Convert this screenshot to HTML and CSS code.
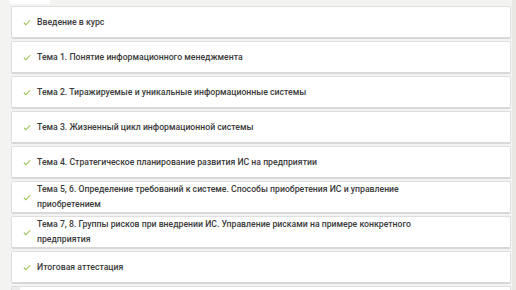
FILE: index.html
```html
<!DOCTYPE html>
<html lang="ru">
<head>
  <meta charset="UTF-8" />
  <meta name="viewport" content="width=device-width, initial-scale=1.0" />
  <title>Содержание курса</title>
  <link rel="stylesheet" href="styles.css">
</head>
<body>
  <div class="page">
    <main class="course">
      <div class="tab"></div>

      <!-- Список тем курса -->
      <ul class="topics">
        <li class="topic">
          <svg class="check" viewBox="0 0 10 8"><path d="M1 4.2 L3.6 6.8 L9 1.2" /></svg>
          <span class="title">Введение в курс</span>
        </li>
        <li class="topic">
          <svg class="check" viewBox="0 0 10 8"><path d="M1 4.2 L3.6 6.8 L9 1.2" /></svg>
          <span class="title">Тема 1. Понятие информационного менеджмента</span>
        </li>
        <li class="topic">
          <svg class="check" viewBox="0 0 10 8"><path d="M1 4.2 L3.6 6.8 L9 1.2" /></svg>
          <span class="title">Тема 2. Тиражируемые и уникальные информационные системы</span>
        </li>
        <li class="topic">
          <svg class="check" viewBox="0 0 10 8"><path d="M1 4.2 L3.6 6.8 L9 1.2" /></svg>
          <span class="title">Тема 3. Жизненный цикл информационной системы</span>
        </li>
        <li class="topic">
          <svg class="check" viewBox="0 0 10 8"><path d="M1 4.2 L3.6 6.8 L9 1.2" /></svg>
          <span class="title">Тема 4. Стратегическое планирование развития ИС на предприятии</span>
        </li>
        <li class="topic">
          <svg class="check" viewBox="0 0 10 8"><path d="M1 4.2 L3.6 6.8 L9 1.2" /></svg>
          <span class="title">Тема 5, 6. Определение требований к системе. Способы приобретения ИС и управление приобретением</span>
        </li>
        <li class="topic">
          <svg class="check" viewBox="0 0 10 8"><path d="M1 4.2 L3.6 6.8 L9 1.2" /></svg>
          <span class="title">Тема 7, 8. Группы рисков при внедрении ИС. Управление рисками на примере конкретного предприятия</span>
        </li>
        <li class="topic">
          <svg class="check" viewBox="0 0 10 8"><path d="M1 4.2 L3.6 6.8 L9 1.2" /></svg>
          <span class="title">Итоговая аттестация</span>
        </li>
        <li class="topic topic-next">
          <div class="inner"></div>
        </li>
      </ul>
    </main>
    <div class="track"></div>
  </div>
</body>
</html>
```

FILE: styles.css
```css
/* Base */
html, body {
  margin: 0;
  padding: 0;
  height: 100%;
  overflow: hidden;
}

body {
  font-family: 'Roboto', 'Open Sans', sans-serif;
  background-color: #f3f3f2;
  color: #3a3a3a;
}

.page {
  display: flex;
  height: 100%;
}

.course {
  flex: 1;
  padding: 0 1px 0 11px;
}

.tab {
  width: 40px;
  height: 4px;
  margin-left: -1px;
  margin-bottom: 2px;
  background: #fff;
}

.track {
  width: 4px;
  background-color: #e9e7e4;
}

/* Topics */
.topics {
  list-style: none;
  margin: 0;
  padding: 0;
}

.topic {
  display: flex;
  align-items: center;
  gap: 6px;
  box-sizing: border-box;
  height: 33px;
  margin-bottom: 2px;
  padding: 0 10px 0 11px;
  background: #fff;
  border: 1px solid #dedede;
  border-bottom: 2px solid #d8d8d8;
  border-radius: 2px;
  font-size: 8.7px;
  font-weight: 500;
  line-height: 15px;
}

.title {
  max-width: 400px;
}

.check {
  flex: none;
  width: 8px;
  height: 7px;
  fill: none;
  stroke: #93bf45;
  stroke-width: 1.3;
}

.topic-next {
  padding: 0 0 0 8px;
  background: #ececec;
}

.topic-next .inner {
  align-self: stretch;
  flex: 1;
  background: #fff;
}
```
